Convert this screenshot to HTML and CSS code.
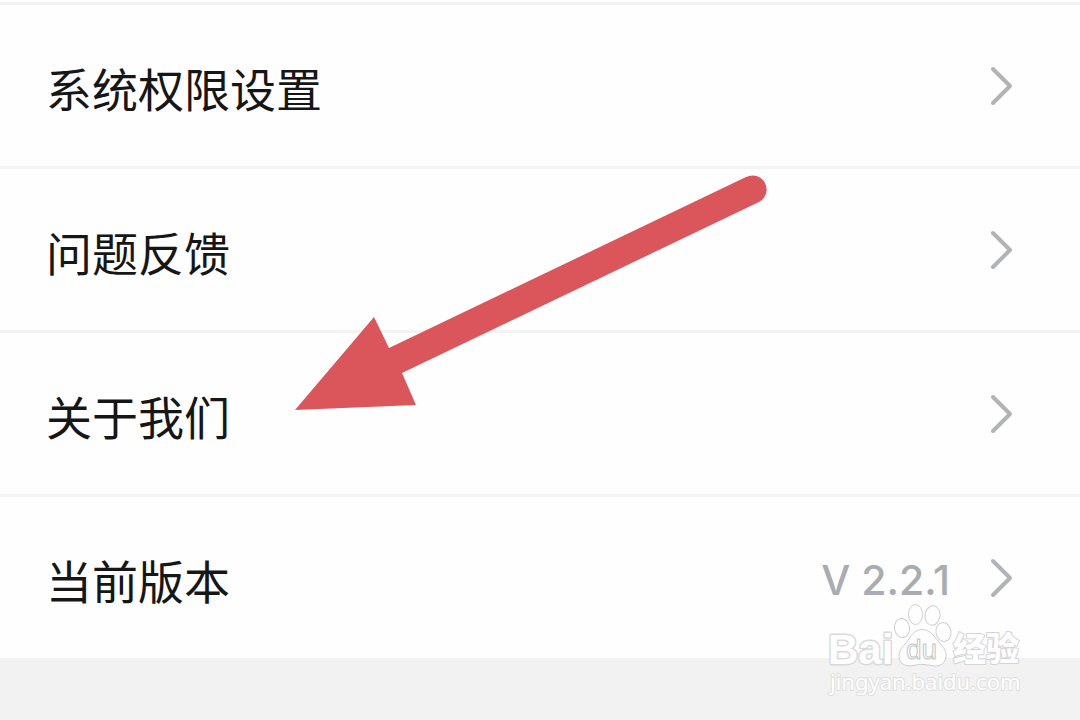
FILE: index.html
```html
<!DOCTYPE html>
<html lang="zh-CN">
<head>
<meta charset="utf-8">
<meta name="viewport" content="width=device-width, initial-scale=1">
<title>设置</title>
<link rel="stylesheet" href="styles.css">
</head>
<body>
<main class="screen">
  <nav class="list">
    <a class="row" href="#permissions">
      <span class="label">系统权限设置</span>
      <svg class="chevron" viewBox="0 0 24 40" aria-hidden="true"><path d="M3 3 L20 20 L3 37"/></svg>
    </a>
    <a class="row" href="#feedback">
      <span class="label">问题反馈</span>
      <svg class="chevron" viewBox="0 0 24 40" aria-hidden="true"><path d="M3 3 L20 20 L3 37"/></svg>
    </a>
    <a class="row" href="#about">
      <span class="label">关于我们</span>
      <svg class="chevron" viewBox="0 0 24 40" aria-hidden="true"><path d="M3 3 L20 20 L3 37"/></svg>
    </a>
    <a class="row" href="#version">
      <span class="label">当前版本</span>
      <span class="value">V 2.2.1</span>
      <svg class="chevron" viewBox="0 0 24 40" aria-hidden="true"><path d="M3 3 L20 20 L3 37"/></svg>
    </a>
  </nav>
  <svg class="arrow" viewBox="0 0 472 236" aria-hidden="true">
    <path d="M0 235 L79 142 L94 173 L451 2 A14 14 0 0 1 464 27 L107 198 L121 230 Z"/>
  </svg>
  <svg class="watermark" viewBox="0 0 210 105" role="img" aria-label="Baidu 经验">
    <text class="mark brand" x="8" y="69">Bai</text>
    <g class="mark paw">
      <ellipse cx="82" cy="33" rx="7.500" ry="9.500" transform="rotate(-8 82 33)"/>
      <ellipse cx="95.500" cy="19.500" rx="7" ry="10"/>
      <ellipse cx="112.500" cy="20.500" rx="7.500" ry="9.800" transform="rotate(8 112.500 20.500)"/>
      <ellipse cx="123.500" cy="37" rx="7.500" ry="9.500" transform="rotate(-10 123.500 37)"/>
      <path d="M102 34.500 C110 34.500 114 41 118 46 C123 52 127 56 126 62 C125 70 118 72 111 70.500 C104 69 99 69 93 70.500 C86 72 79 69 79 61 C79 54 85 50 89 44 C92 39 96 34.500 102 34.500Z"/>
    </g>
    <text class="mark du" x="86" y="64">du</text>
    <text class="mark cjk" x="133" y="66">经验</text>
    <text class="mark url" x="10" y="95">jingyan.baidu.com</text>
  </svg>
</main>
</body>
</html>
```
FILE: styles.css
```css
* {
  box-sizing: border-box;
}

body {
  margin: 0;
  background: #f2f2f2;
  font-family: Inter, "Noto Sans CJK SC", sans-serif;
}

.screen {
  position: relative;
  min-height: 100vh;
}

.list {
  padding-top: 2px;
  background: #fefefe;
}

.row {
  display: flex;
  align-items: center;
  min-height: 164px;
  padding: 0 66px 0 46px;
  border-top: 3px solid #f3f3f3;
  color: #161616;
  text-decoration: none;
}

.label {
  flex: 1;
  padding-top: 2px;
  font-family: "Noto Sans CJK SC", sans-serif;
  font-size: 46px;
  line-height: 64px;
}

.value {
  margin-right: 40px;
  padding-top: 4px;
  color: #a9acb1;
  font-size: 41px;
  font-weight: 500;
  line-height: 48px;
}

.chevron {
  width: 24px;
  height: 40px;
  fill: none;
  stroke: #b1b3b7;
  stroke-width: 4;
  stroke-linecap: round;
  stroke-linejoin: round;
}

.arrow {
  position: absolute;
  top: 175px;
  left: 295px;
  width: 472px;
  height: 236px;
  fill: #db565b;
}

.watermark {
  position: absolute;
  top: 595px;
  right: 50px;
  width: 210px;
  height: 105px;
}

.mark {
  fill: #fefefe;
  stroke: #dadada;
  stroke-width: 1;
  stroke-linejoin: round;
}

.paw {
  stroke: #cfcfcf;
}

.brand {
  font: bold 42px "Liberation Sans", sans-serif;
  paint-order: stroke;
  stroke-width: 3;
}

.du {
  font: 28px "Liberation Sans", sans-serif;
  stroke: #c4c4c4;
}

.cjk {
  font: 900 33px "Noto Sans CJK SC", sans-serif;
  paint-order: stroke;
  stroke: #d4d4d4;
  stroke-width: 2;
}

.url {
  font: 22px "Noto Sans", sans-serif;
  paint-order: stroke;
  stroke: #e0e0e0;
  stroke-width: 2;
}
```
